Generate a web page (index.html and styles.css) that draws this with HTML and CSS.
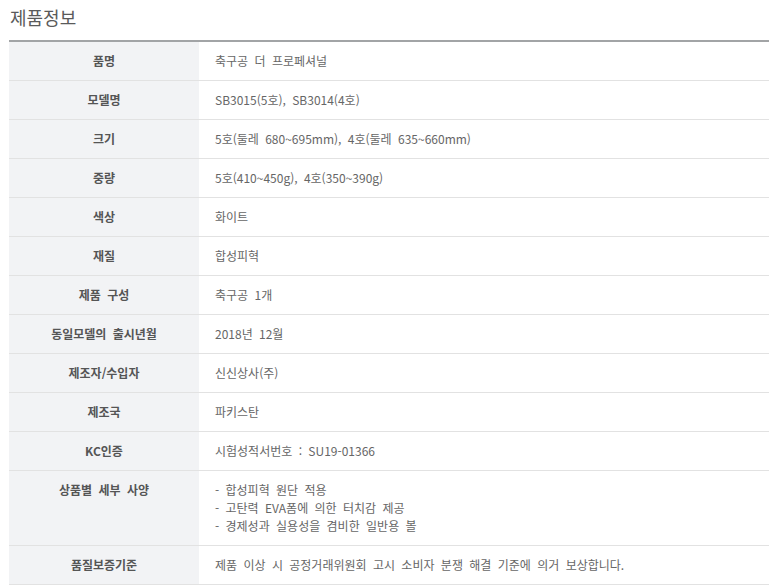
FILE: index.html
```html
<!DOCTYPE html>
<html lang="ko">
<head>
<meta charset="utf-8">
<link rel="stylesheet" href="styles.css">
</head>
<body>
<div class="wrap">
  <h2 class="title">제품정보</h2>
  <table class="spec">
    <tr><th>품명</th><td>축구공 더 프로페셔널</td></tr>
    <tr><th>모델명</th><td>SB3015(5호), SB3014(4호)</td></tr>
    <tr><th>크기</th><td>5호(둘레 680~695mm), 4호(둘레 635~660mm)</td></tr>
    <tr><th>중량</th><td>5호(410~450g), 4호(350~390g)</td></tr>
    <tr><th>색상</th><td>화이트</td></tr>
    <tr><th>재질</th><td>합성피혁</td></tr>
    <tr><th>제품 구성</th><td>축구공 1개</td></tr>
    <tr><th>동일모델의 출시년월</th><td>2018년 12월</td></tr>
    <tr><th>제조자/수입자</th><td>신신상사(주)</td></tr>
    <tr><th>제조국</th><td>파키스탄</td></tr>
    <tr><th>KC인증</th><td>시험성적서번호 : SU19-01366</td></tr>
    <tr><th>상품별 세부 사양</th><td>- 합성피혁 원단 적용<br>- 고탄력 EVA폼에 의한 터치감 제공<br>- 경제성과 실용성을 겸비한 일반용 볼</td></tr>
    <tr><th>품질보증기준</th><td>제품 이상 시 공정거래위원회 고시 소비자 분쟁 해결 기준에 의거 보상합니다.</td></tr>
  </table>
</div>
</body>
</html>
```
FILE: styles.css
```css
html, body {
  margin: 0;
  padding: 0;
  background: #fff;
}
body {
  font-family: "Noto Sans CJK KR", "Noto Sans", sans-serif;
  color: #666;
}
.wrap {
  padding: 6px 13px 0 9px;
}
.title {
  margin: 0 0 12px 1px;
  font-size: 18px;
  font-weight: normal;
  line-height: 22px;
  color: #5a5a5a;
}
.spec {
  width: 760px;
  border-collapse: collapse;
  border-top: 2px solid #a2a4a6;
  font-size: 12px;
  word-spacing: 3px;
}
.spec th, .spec td {
  border-bottom: 1px solid #e2e2e2;
  padding: 10px 0;
  line-height: 18px;
  vertical-align: top;
}
.spec th {
  width: 190px;
  background: #f2f3f5;
  color: #555;
  font-weight: bold;
  text-align: center;
}
.spec td {
  padding-left: 16px;
  text-align: left;
  color: #666;
}
```
